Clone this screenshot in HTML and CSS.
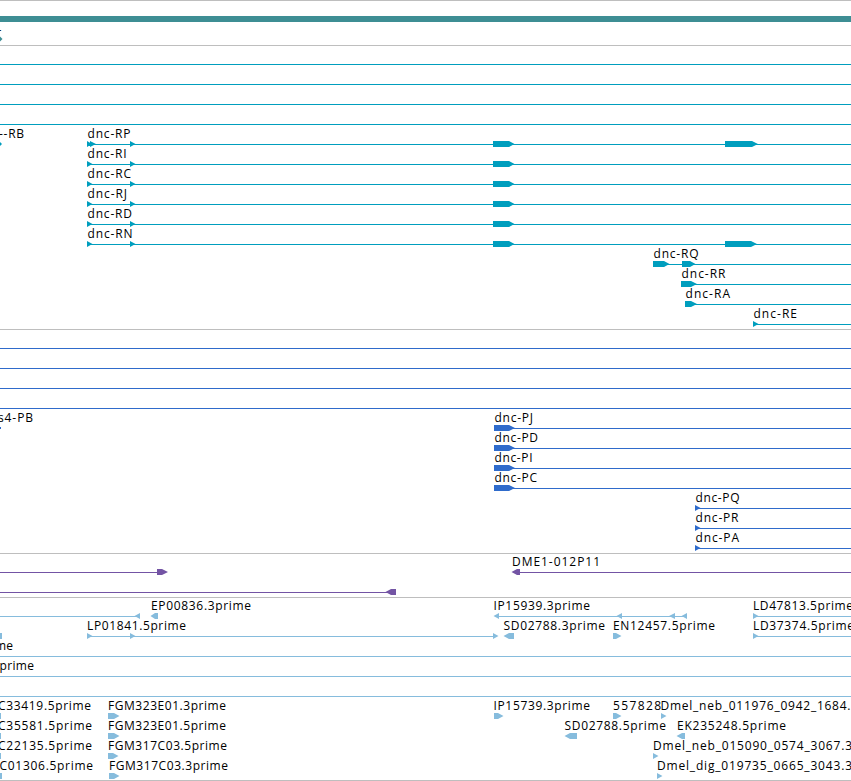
FILE: index.html
```
<!DOCTYPE html>
<html lang="en">
<head>
    <meta charset="UTF-8">
    <meta name="viewport" content="width=device-width, initial-scale=1.0">
    <title>dnc - Genome Browser</title>
    <link rel="stylesheet" href="styles.css">
</head>
<body>
    <main class="browser">
        <!-- Gene span -->
        <section class="track gene">
            <svg class="row span"><rect y="15" width="851" height="6"/></svg>
            <svg class="row"><text x="-2.5" y="13">-</text><path d="M0 15.5L2.5 18L0 20.5z"/></svg>
        </section>

        <!-- Transcripts -->
        <section class="track transcript">
            <svg class="row"><rect y="18" width="851" height="1"/></svg>
            <svg class="row"><rect y="18" width="851" height="1"/></svg>
            <svg class="row"><rect y="18" width="851" height="1"/></svg>
            <svg class="row"><rect y="18" width="851" height="1"/></svg>
            <svg class="row">
                <text x="-1" y="12" textLength="25">--RB</text>
                <text x="87.5" y="12" textLength="43">dnc-RP</text>
                <rect x="87" y="18" width="764" height="1"/>
                <path d="M0 16L2 18L0 20z M87 15L92 18L87 21z M90 15L96 18L90 21z M130 15L135.5 18L130 21z M493 15H509L514.5 18L509 21H493z M725 15H752L758 18L752 21H725z"/>
            </svg>
            <svg class="row">
                <text x="87.5" y="12" textLength="39">dnc-RI</text>
                <rect x="87" y="18" width="764" height="1"/>
                <path d="M87 15L92.5 18L87 21z M130 15L135.5 18L130 21z M493 15H509L514.5 18L509 21H493z"/>
            </svg>
            <svg class="row">
                <text x="87.5" y="12" textLength="43.5">dnc-RC</text>
                <rect x="87" y="18" width="764" height="1"/>
                <path d="M87 15L92.5 18L87 21z M130 15L135.5 18L130 21z M493 15H509L514.5 18L509 21H493z"/>
            </svg>
            <svg class="row">
                <text x="87.5" y="12" textLength="39.5">dnc-RJ</text>
                <rect x="87" y="18" width="764" height="1"/>
                <path d="M87 15L92.5 18L87 21z M130 15L135.5 18L130 21z M493 15H509L514.5 18L509 21H493z"/>
            </svg>
            <svg class="row">
                <text x="87.5" y="12" textLength="44.5">dnc-RD</text>
                <rect x="87" y="18" width="764" height="1"/>
                <path d="M87 15L92.5 18L87 21z M130 15L135.5 18L130 21z M493 15H509L514.5 18L509 21H493z"/>
            </svg>
            <svg class="row">
                <text x="87.5" y="12" textLength="45">dnc-RN</text>
                <rect x="87" y="18" width="764" height="1"/>
                <path d="M87 15L92.5 18L87 21z M130 15L135.5 18L130 21z M493 15H509L514.5 18L509 21H493z M725 15H751L757 18L751 21H725z"/>
            </svg>
            <svg class="row">
                <text x="653.5" y="12" textLength="45">dnc-RQ</text>
                <rect x="653" y="18" width="198" height="1"/>
                <path d="M653 15H664L669.5 18L664 21H653z M682 15H690L695.5 18L690 21H682z"/>
            </svg>
            <svg class="row">
                <text x="681.5" y="12" textLength="44">dnc-RR</text>
                <rect x="681" y="18" width="170" height="1"/>
                <path d="M681 15H691L697 18L691 21H681z"/>
            </svg>
            <svg class="row">
                <text x="685.5" y="12" textLength="44.5">dnc-RA</text>
                <rect x="685" y="18" width="166" height="1"/>
                <path d="M685 15H691L697 18L691 21H685z"/>
            </svg>
            <svg class="row">
                <text x="753.5" y="12" textLength="43.5">dnc-RE</text>
                <rect x="753" y="18" width="98" height="1"/>
                <path d="M753 15L758.5 18L753 21z"/>
            </svg>
        </section>

        <!-- Coding sequences -->
        <section class="track cds">
            <svg class="row"><rect y="18" width="851" height="1"/></svg>
            <svg class="row"><rect y="18" width="851" height="1"/></svg>
            <svg class="row"><rect y="18" width="851" height="1"/></svg>
            <svg class="row"><rect y="18" width="851" height="1"/></svg>
            <svg class="row">
                <text x="-2" y="12" textLength="35">s4-PB</text>
                <text x="494.5" y="12" textLength="38.5">dnc-PJ</text>
                <rect x="494" y="18" width="357" height="1"/>
                <path d="M0 17H1V19H0z M494 15H509L515 18L509 21H494z"/>
            </svg>
            <svg class="row">
                <text x="494.5" y="12" textLength="43.5">dnc-PD</text>
                <rect x="494" y="18" width="357" height="1"/>
                <path d="M494 15H509L515 18L509 21H494z"/>
            </svg>
            <svg class="row">
                <text x="494.5" y="12" textLength="38">dnc-PI</text>
                <rect x="494" y="18" width="357" height="1"/>
                <path d="M494 15H509L515 18L509 21H494z"/>
            </svg>
            <svg class="row">
                <text x="494.5" y="12" textLength="42.5">dnc-PC</text>
                <rect x="494" y="18" width="357" height="1"/>
                <path d="M494 15H509L515 18L509 21H494z"/>
            </svg>
            <svg class="row">
                <text x="695.5" y="12" textLength="44">dnc-PQ</text>
                <rect x="695" y="18" width="156" height="1"/>
                <path d="M695 15L700.5 18L695 21z"/>
            </svg>
            <svg class="row">
                <text x="695.5" y="12" textLength="43">dnc-PR</text>
                <rect x="695" y="18" width="156" height="1"/>
                <path d="M695 15L700.5 18L695 21z"/>
            </svg>
            <svg class="row">
                <text x="695.5" y="12" textLength="43.5">dnc-PA</text>
                <rect x="695" y="18" width="156" height="1"/>
                <path d="M695 15L700.5 18L695 21z"/>
            </svg>
        </section>

        <!-- Clones -->
        <section class="track clone">
            <svg class="row">
                <text x="512" y="12" textLength="88">DME1-012P11</text>
                <rect y="18" width="160" height="1"/>
                <rect x="515" y="18" width="336" height="1"/>
                <path d="M157 15H162L168 18L162 21H157z M520 15H517L511.5 18L517 21H520z"/>
            </svg>
            <svg class="row">
                <rect y="18" width="390" height="1"/>
                <path d="M396 15H391L385.5 18L391 21H396z"/>
            </svg>
        </section>

        <!-- ESTs -->
        <section class="track est">
            <svg class="row">
                <text x="151" y="12" textLength="100">EP00836.3prime</text>
                <text x="493.5" y="12" textLength="96.5">IP15939.3prime</text>
                <text x="753" y="12" textLength="100">LD47813.5prime</text>
                <rect y="18" width="138" height="1"/>
                <rect x="496" y="18" width="190" height="1"/>
                <rect x="753" y="18" width="98" height="1"/>
                <path d="M140 15L134.5 18L140 21z M158 15H155L150.5 18L155 21H158z M499 15L493.5 18L499 21z M622 15L616.5 18L622 21z M675 15L669 18L675 21z M687 15L681.5 18L687 21z M753 15L758.5 18L753 21z"/>
            </svg>
            <svg class="row">
                <text x="87" y="12" textLength="99">LP01841.5prime</text>
                <text x="503.5" y="12" textLength="101.5">SD02788.3prime</text>
                <text x="613" y="12" textLength="102">EN12457.5prime</text>
                <text x="753" y="12" textLength="101">LD37374.5prime</text>
                <rect x="87" y="18" width="408" height="1"/>
                <rect x="753" y="18" width="98" height="1"/>
                <path d="M0 15H2V21H0z M87 15L92.5 18L87 21z M130 15L135.5 18L130 21z M493 15L498.5 18L493 21z M514 15H509L503.5 18L509 21H514z M613 15H616L621.5 18L616 21H613z M753 15L758.5 18L753 21z"/>
            </svg>
            <svg class="row">
                <text x="-5" y="12" textLength="18">me</text>
                <rect y="18" width="851" height="1"/>
            </svg>
            <svg class="row">
                <text x="-0.5" y="12" textLength="34.5">prime</text>
                <rect y="18" width="851" height="1"/>
            </svg>
            <svg class="row"><rect y="18" width="851" height="1"/></svg>
            <svg class="row">
                <text x="-2" y="12" textLength="93">C33419.5prime</text>
                <text x="108" y="12" textLength="118">FGM323E01.3prime</text>
                <text x="493.5" y="12" textLength="96.5">IP15739.3prime</text>
                <text x="613" y="12" textLength="48">557828</text>
                <text x="660.5" y="12" textLength="190">Dmel_neb_011976_0942_1684.</text>
                <path d="M0 15H1V21H0z M108 15H114L119.5 18L114 21H108z M494 15H498L503.5 18L498 21H494z M613 15H616L621.5 18L616 21H613z M661 15L666.5 18L661 21z"/>
            </svg>
            <svg class="row">
                <text x="-2" y="12" textLength="94">C35581.5prime</text>
                <text x="108" y="12" textLength="118">FGM323E01.5prime</text>
                <text x="564.5" y="12" textLength="101.5">SD02788.5prime</text>
                <text x="677" y="12" textLength="109">EK235248.5prime</text>
                <path d="M0 15H1V21H0z M108 15H114L119.5 18L114 21H108z M577 15H570L564.5 18L570 21H577z M685 15H682L676.5 18L682 21H685z"/>
            </svg>
            <svg class="row">
                <text x="-2" y="12" textLength="94">C22135.5prime</text>
                <text x="108" y="12" textLength="119">FGM317C03.5prime</text>
                <text x="653" y="12" textLength="199">Dmel_neb_015090_0574_3067.3</text>
                <path d="M0 15H1V21H0z M108 15H113L118.5 18L113 21H108z M653 15L658.5 18L653 21z"/>
            </svg>
            <svg class="row">
                <text x="-0.5" y="12" textLength="93.5">C01306.5prime</text>
                <text x="109" y="12" textLength="119">FGM317C03.3prime</text>
                <text x="657" y="12" textLength="195">Dmel_dig_019735_0665_3043.3</text>
                <path d="M0 15H2V21H0z M109 15H114L119.5 18L114 21H109z M657 15L662.5 18L657 21z"/>
            </svg>
        </section>
    </main>
</body>
</html>
```

FILE: styles.css
```
* {
    margin: 0;
    padding: 0;
    box-sizing: border-box;
}

body {
    background-color: #fff;
    font-family: 'Open Sans', 'Noto Sans', sans-serif;
    font-size: 12px;
    overflow: hidden;
}

.browser {
    width: 851px;
    border-bottom: 1px solid #bebebe;
}

.track {
    border-top: 1px solid #bebebe;
    padding-bottom: 3px;
}

.row {
    display: block;
    width: 100%;
    height: 20px;
    overflow: visible;
}

.row text {
    fill: #000;
}

.gene {
    fill: #3e8e94;
    padding-bottom: 4px;
}

.transcript {
    fill: #009ebe;
}

.cds {
    fill: #2f6bcb;
}

.clone {
    fill: #7354a4;
}

.est {
    fill: #86bcdd;
    padding-bottom: 2px;
}
```
